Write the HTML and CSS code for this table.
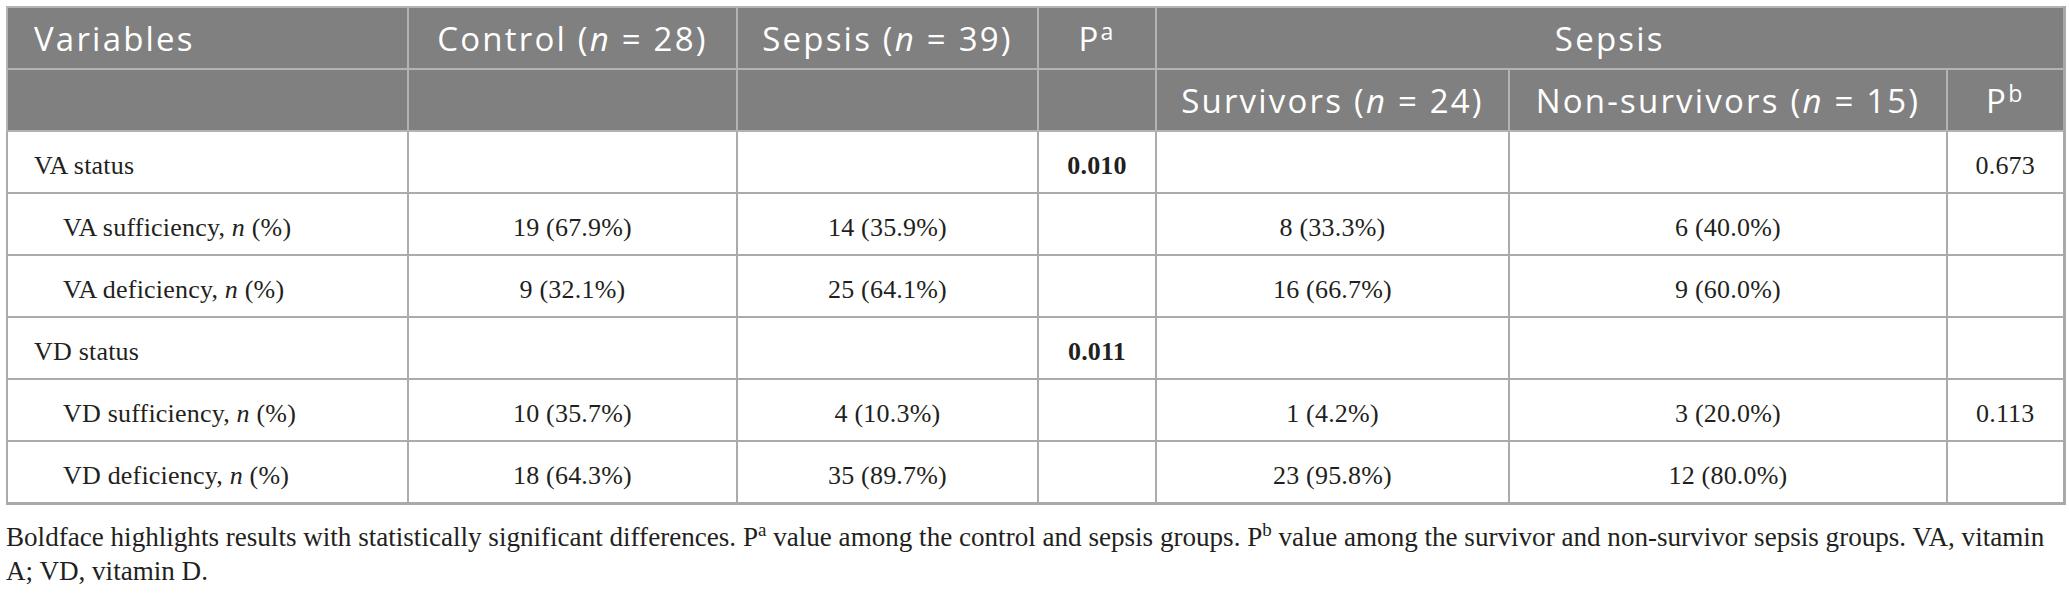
FILE: index.html
```html
<!DOCTYPE html>
<html lang="en">
<head>
<meta charset="utf-8">
<title>Vitamin status table</title>
<link rel="stylesheet" href="styles.css">
</head>
<body>
<div class="page">
  <table class="data">
    <colgroup>
      <col class="c-var">
      <col class="c-ctrl">
      <col class="c-sep">
      <col class="c-pa">
      <col class="c-surv">
      <col class="c-non">
      <col class="c-pb">
    </colgroup>
    <thead>
      <tr>
        <th class="left">Variables</th>
        <th>Control (<i>n</i> = 28)</th>
        <th>Sepsis (<i>n</i> = 39)</th>
        <th>P<sup>a</sup></th>
        <th colspan="3">Sepsis</th>
      </tr>
      <tr>
        <th></th>
        <th></th>
        <th></th>
        <th></th>
        <th>Survivors (<i>n</i> = 24)</th>
        <th>Non-survivors (<i>n</i> = 15)</th>
        <th>P<sup>b</sup></th>
      </tr>
    </thead>
    <tbody>
      <tr>
        <td class="left">VA status</td>
        <td></td>
        <td></td>
        <td><b>0.010</b></td>
        <td></td>
        <td></td>
        <td>0.673</td>
      </tr>
      <tr>
        <td class="left indent">VA sufficiency, <i>n</i> (%)</td>
        <td>19 (67.9%)</td>
        <td>14 (35.9%)</td>
        <td></td>
        <td>8 (33.3%)</td>
        <td>6 (40.0%)</td>
        <td></td>
      </tr>
      <tr>
        <td class="left indent">VA deficiency, <i>n</i> (%)</td>
        <td>9 (32.1%)</td>
        <td>25 (64.1%)</td>
        <td></td>
        <td>16 (66.7%)</td>
        <td>9 (60.0%)</td>
        <td></td>
      </tr>
      <tr>
        <td class="left">VD status</td>
        <td></td>
        <td></td>
        <td><b>0.011</b></td>
        <td></td>
        <td></td>
        <td></td>
      </tr>
      <tr>
        <td class="left indent">VD sufficiency, <i>n</i> (%)</td>
        <td>10 (35.7%)</td>
        <td>4 (10.3%)</td>
        <td></td>
        <td>1 (4.2%)</td>
        <td>3 (20.0%)</td>
        <td>0.113</td>
      </tr>
      <tr>
        <td class="left indent">VD deficiency, <i>n</i> (%)</td>
        <td>18 (64.3%)</td>
        <td>35 (89.7%)</td>
        <td></td>
        <td>23 (95.8%)</td>
        <td>12 (80.0%)</td>
        <td></td>
      </tr>
    </tbody>
  </table>
  <p class="note">Boldface highlights results with statistically significant differences. P<sup>a</sup> value among the control and sepsis groups. P<sup>b</sup> value among the survivor and non-survivor sepsis groups. VA, vitamin A; VD, vitamin D.</p>
</div>
</body>
</html>
```
FILE: styles.css
```css
html, body {
  margin: 0;
  padding: 0;
  background: #ffffff;
}

.page {
  padding: 6px 6px 0 6px;
  color: #231f20;
  font-family: "Liberation Serif", "Times New Roman", serif;
}

.data {
  border-collapse: collapse;
  table-layout: fixed;
  width: 2057px;
  border: 2px solid #a9a9a9;
  border-right-width: 3px;
  border-bottom-width: 3px;
}

.c-var { width: 401px; }
.c-ctrl { width: 329px; }
.c-sep { width: 301px; }
.c-pa { width: 118px; }
.c-surv { width: 353px; }
.c-non { width: 438px; }
.c-pb { width: 117px; }

.data th,
.data td {
  border: 2px solid #ababab;
  padding: 0 4px;
  text-align: center;
  vertical-align: middle;
  white-space: nowrap;
}

.data th {
  height: 60px;
  background: #808080;
  color: #ffffff;
  font-family: "Open Sans", "Noto Sans", sans-serif;
  font-weight: 400;
  font-size: 33px;
  letter-spacing: 2.2px;
  border-color: #b3b3b3;
}

.data th i {
  font-style: italic;
}

.data th sup {
  font-size: 0.7em;
  vertical-align: 0;
  position: relative;
  top: -0.45em;
  line-height: 0;
}

.data td {
  height: 53px;
  font-size: 26px;
  letter-spacing: 0.2px;
  padding-top: 7px;
}

.data .left {
  text-align: left;
  padding-left: 26px;
}

.data .indent {
  padding-left: 55px;
}

.note {
  margin: 15px 0 0 0;
  font-size: 27.1px;
  line-height: 34px;
  width: 2040px;
}

.note sup {
  font-size: 0.7em;
  line-height: 0;
}
```
